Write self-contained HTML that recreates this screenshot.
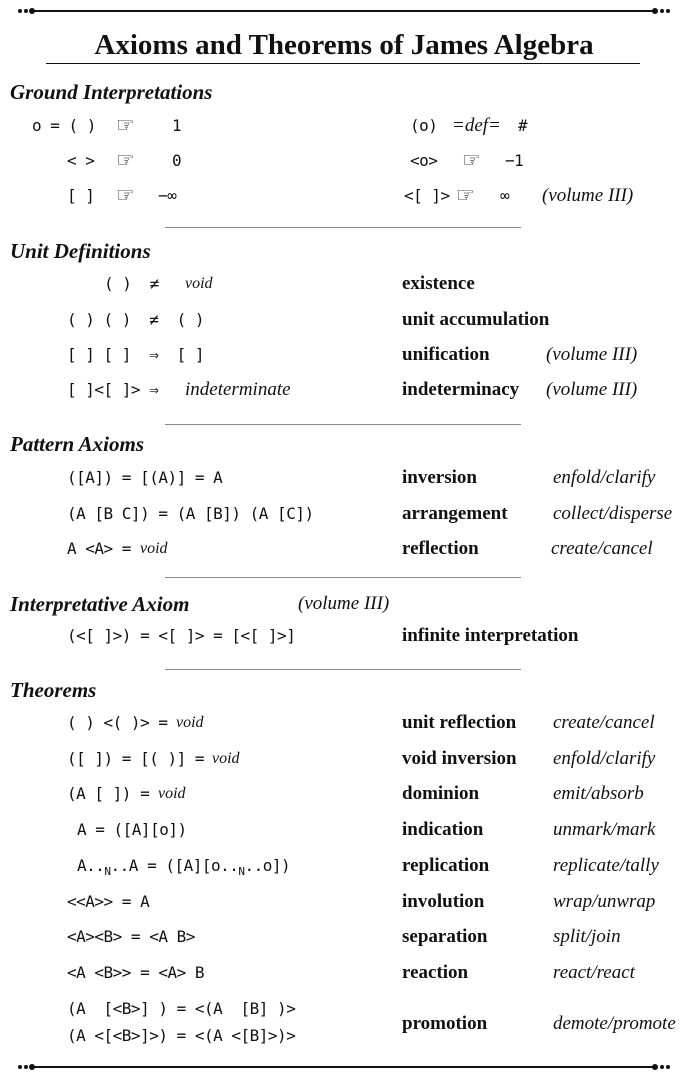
<!DOCTYPE html>
<html><head><meta charset="utf-8"><style>
body{margin:0;width:688px;height:1080px;background:#fff;position:relative;overflow:hidden;color:#111}
div.t{position:absolute;white-space:pre;line-height:22px;height:22px}
.m{font-family:"DejaVu Sans Mono","Liberation Mono",monospace;font-size:16px;letter-spacing:-0.5px}
.b{font-family:"Liberation Serif",serif;font-weight:bold;font-size:19px}
.i{font-family:"Liberation Serif",serif;font-style:italic;font-size:19px}
.h{font-family:"Liberation Serif",serif;font-style:italic;font-weight:bold;font-size:21px}
.sep{position:absolute;left:165px;width:356px;height:1px;background:#888}
.rule{position:absolute;left:34px;width:620px;height:2px;background:#111}
.dot{position:absolute;width:4px;height:4px;border-radius:50%;background:#111}
.bd{position:absolute;width:6px;height:6px;border-radius:50%;background:#111}
.hd{font-size:21px;font-family:"DejaVu Sans",sans-serif}
sub{font-size:11px}
</style></head><body>
<div class="rule" style="top:10px"></div>
<div class="dot" style="left:18px;top:9px"></div><div class="dot" style="left:24px;top:9px"></div><div class="bd" style="left:29px;top:8px"></div>
<div class="bd" style="left:652px;top:8px"></div><div class="dot" style="left:660px;top:9px"></div><div class="dot" style="left:666px;top:9px"></div>
<div class="t" style="left:0;width:688px;text-align:center;top:28px;height:34px;line-height:34px;font-family:'Liberation Serif',serif;font-weight:bold;font-size:29px">Axioms and Theorems of James Algebra</div>
<div style="position:absolute;left:46px;top:63px;width:594px;height:1px;background:#111"></div>

<div class="t h" style="left:10px;top:81px">Ground Interpretations</div>
<div class="t m" style="left:32px;top:115px">o = ( )</div><div class="t hd" style="left:116px;top:114px">☞</div><div class="t m" style="left:172px;top:115px">1</div>
<div class="t m" style="left:410px;top:115px">(o)</div><div class="t i" style="left:452px;top:115px">=def=</div><div class="t m" style="left:518px;top:115px">#</div>
<div class="t m" style="left:67px;top:150px">&lt; &gt;</div><div class="t hd" style="left:116px;top:149px">☞</div><div class="t m" style="left:172px;top:150px">0</div>
<div class="t m" style="left:410px;top:150px">&lt;o&gt;</div><div class="t hd" style="left:462px;top:149px">☞</div><div class="t m" style="left:505px;top:150px">−1</div>
<div class="t m" style="left:67px;top:185px">[ ]</div><div class="t hd" style="left:116px;top:184px">☞</div><div class="t m" style="left:158px;top:185px">−∞</div>
<div class="t m" style="left:404px;top:185px">&lt;[ ]&gt;</div><div class="t hd" style="left:456px;top:184px">☞</div><div class="t m" style="left:500px;top:185px">∞</div><div class="t i" style="left:542px;top:185px">(volume III)</div>
<div class="sep" style="top:227px"></div>

<div class="t h" style="left:10px;top:240px">Unit Definitions</div>
<div class="t m" style="left:104px;top:273px">( )  ≠</div><div class="t i" style="left:185px;top:273px;font-size:16px">void</div><div class="t b" style="left:402px;top:273px">existence</div>
<div class="t m" style="left:67px;top:309px">( ) ( )  ≠  ( )</div><div class="t b" style="left:402px;top:309px">unit accumulation</div>
<div class="t m" style="left:67px;top:344px">[ ] [ ]  ⇒  [ ]</div><div class="t b" style="left:402px;top:344px">unification</div><div class="t i" style="left:546px;top:344px">(volume III)</div>
<div class="t m" style="left:67px;top:379px">[ ]&lt;[ ]&gt; ⇒</div><div class="t i" style="left:185px;top:379px">indeterminate</div><div class="t b" style="left:402px;top:379px">indeterminacy</div><div class="t i" style="left:546px;top:379px">(volume III)</div>
<div class="sep" style="top:424px"></div>

<div class="t h" style="left:10px;top:433px">Pattern Axioms</div>
<div class="t m" style="left:67px;top:467px">([A]) = [(A)] = A</div><div class="t b" style="left:402px;top:467px">inversion</div><div class="t i" style="left:553px;top:467px">enfold/clarify</div>
<div class="t m" style="left:67px;top:503px">(A [B C]) = (A [B]) (A [C])</div><div class="t b" style="left:402px;top:503px">arrangement</div><div class="t i" style="left:553px;top:503px">collect/disperse</div>
<div class="t m" style="left:67px;top:538px">A &lt;A&gt; =</div><div class="t i" style="left:140px;top:538px;font-size:16px">void</div><div class="t b" style="left:402px;top:538px">reflection</div><div class="t i" style="left:551px;top:538px">create/cancel</div>
<div class="sep" style="top:577px"></div>

<div class="t h" style="left:10px;top:593px">Interpretative Axiom</div><div class="t i" style="left:298px;top:593px">(volume III)</div>
<div class="t m" style="left:67px;top:625px">(&lt;[ ]&gt;) = &lt;[ ]&gt; = [&lt;[ ]&gt;]</div><div class="t b" style="left:402px;top:625px">infinite interpretation</div>
<div class="sep" style="top:669px"></div>

<div class="t h" style="left:10px;top:679px">Theorems</div>
<div class="t m" style="left:67px;top:712px">( ) &lt;( )&gt; =</div><div class="t i" style="left:176px;top:712px;font-size:16px">void</div><div class="t b" style="left:402px;top:712px">unit reflection</div><div class="t i" style="left:553px;top:712px">create/cancel</div>
<div class="t m" style="left:67px;top:748px">([ ]) = [( )] =</div><div class="t i" style="left:212px;top:748px;font-size:16px">void</div><div class="t b" style="left:402px;top:748px">void inversion</div><div class="t i" style="left:553px;top:748px">enfold/clarify</div>
<div class="t m" style="left:67px;top:783px">(A [ ]) =</div><div class="t i" style="left:158px;top:783px;font-size:16px">void</div><div class="t b" style="left:402px;top:783px">dominion</div><div class="t i" style="left:553px;top:783px">emit/absorb</div>
<div class="t m" style="left:77px;top:819px">A = ([A][o])</div><div class="t b" style="left:402px;top:819px">indication</div><div class="t i" style="left:553px;top:819px">unmark/mark</div>
<div class="t m" style="left:77px;top:855px">A..<sub>N</sub>..A = ([A][o..<sub>N</sub>..o])</div><div class="t b" style="left:402px;top:855px">replication</div><div class="t i" style="left:553px;top:855px">replicate/tally</div>
<div class="t m" style="left:67px;top:891px">&lt;&lt;A&gt;&gt; = A</div><div class="t b" style="left:402px;top:891px">involution</div><div class="t i" style="left:553px;top:891px">wrap/unwrap</div>
<div class="t m" style="left:67px;top:926px">&lt;A&gt;&lt;B&gt; = &lt;A B&gt;</div><div class="t b" style="left:402px;top:926px">separation</div><div class="t i" style="left:553px;top:926px">split/join</div>
<div class="t m" style="left:67px;top:962px">&lt;A &lt;B&gt;&gt; = &lt;A&gt; B</div><div class="t b" style="left:402px;top:962px">reaction</div><div class="t i" style="left:553px;top:962px">react/react</div>
<div class="t m" style="left:67px;top:998px">(A  [&lt;B&gt;] ) = &lt;(A  [B] )&gt;</div>
<div class="t m" style="left:67px;top:1025px">(A &lt;[&lt;B&gt;]&gt;) = &lt;(A &lt;[B]&gt;)&gt;</div>
<div class="t b" style="left:402px;top:1013px">promotion</div><div class="t i" style="left:553px;top:1013px">demote/promote</div>

<div class="rule" style="top:1066px"></div>
<div class="dot" style="left:18px;top:1065px"></div><div class="dot" style="left:24px;top:1065px"></div><div class="bd" style="left:29px;top:1064px"></div>
<div class="bd" style="left:652px;top:1064px"></div><div class="dot" style="left:660px;top:1065px"></div><div class="dot" style="left:666px;top:1065px"></div>
</body></html>
